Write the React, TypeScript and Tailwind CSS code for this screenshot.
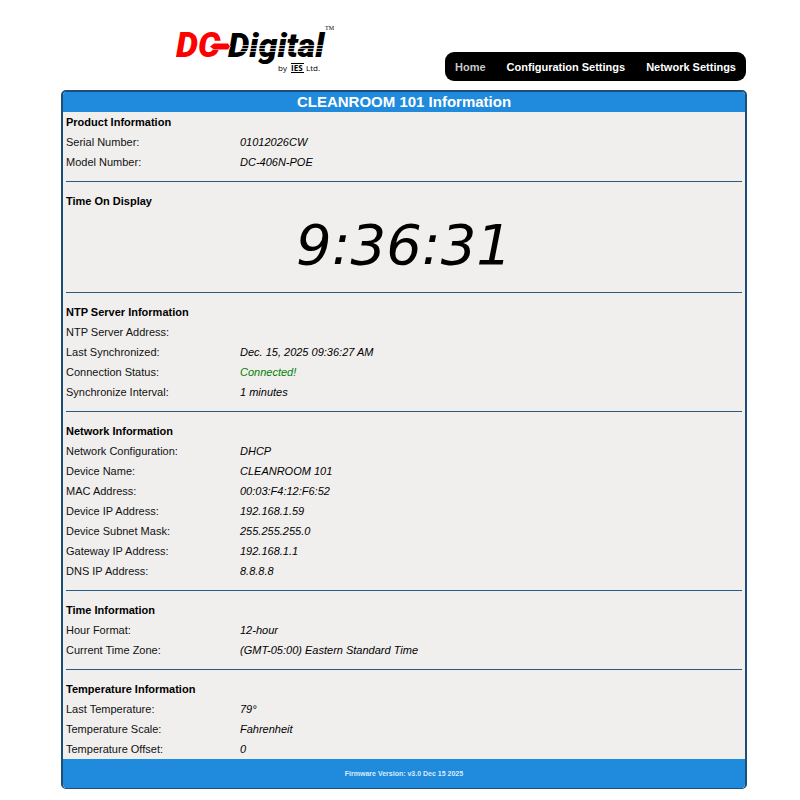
import clsx from 'clsx';
import type { ReactNode } from 'react';

interface Row {
  label: string;
  value: string;
  tone?: 'ok';
}

const navLinks = [
  { label: 'Home', href: '#home', current: true },
  { label: 'Configuration Settings', href: '#configuration', current: false },
  { label: 'Network Settings', href: '#network', current: false },
];

const productRows: Row[] = [
  { label: 'Serial Number:', value: '01012026CW' },
  { label: 'Model Number:', value: 'DC-406N-POE' },
];

const ntpRows: Row[] = [
  { label: 'NTP Server Address:', value: '' },
  { label: 'Last Synchronized:', value: 'Dec. 15, 2025 09:36:27 AM' },
  { label: 'Connection Status:', value: 'Connected!', tone: 'ok' },
  { label: 'Synchronize Interval:', value: '1 minutes' },
];

const networkRows: Row[] = [
  { label: 'Network Configuration:', value: 'DHCP' },
  { label: 'Device Name:', value: 'CLEANROOM 101' },
  { label: 'MAC Address:', value: '00:03:F4:12:F6:52' },
  { label: 'Device IP Address:', value: '192.168.1.59' },
  { label: 'Device Subnet Mask:', value: '255.255.255.0' },
  { label: 'Gateway IP Address:', value: '192.168.1.1' },
  { label: 'DNS IP Address:', value: '8.8.8.8' },
];

const timeRows: Row[] = [
  { label: 'Hour Format:', value: '12-hour' },
  { label: 'Current Time Zone:', value: '(GMT-05:00) Eastern Standard Time' },
];

const temperatureRows: Row[] = [
  { label: 'Last Temperature:', value: '79°' },
  { label: 'Temperature Scale:', value: 'Fahrenheit' },
  { label: 'Temperature Offset:', value: '0' },
];

function Logo() {
  return <svg viewBox="0 0 160 52" className="h-[52px] w-[160px]" role="img" aria-label="DC-Digital by IES Ltd.">
    <g className="font-[Roboto,sans-serif] font-black italic">
      <text x="0" y="33" fill="#fe0000" className="text-[35px]">DC</text>
      <text x="52" y="33" fill="#000" className="text-[34px]">Digital</text>
    </g>
    <path d="M34 22.5l4-3h14l2 3-2 3H38z" fill="#fe0000" stroke="#fff" strokeWidth="1.2" paintOrder="stroke" />
    {/* speed lines cut through the black half of the word */}
    <path d="M61 21.5h86M61 24.5h86M61 27.5h86" stroke="#fff" strokeWidth="0.7" />
    <text x="149" y="6" className="font-['Liberation_Serif',serif] text-[6px]">TM</text>
    <g className="font-['Open_Sans',sans-serif] text-[8px]">
      <text x="102" y="47">by</text>
      <text x="115" y="47" className="font-bold">IES</text>
      <text x="130" y="47">Ltd.</text>
    </g>
    <path d="M115 39.5h13M115 48.5h13" stroke="#000" strokeWidth="1" />
  </svg>;
}

function Section({ title, rows, children }: { title: string; rows?: Row[]; children?: ReactNode }) {
  return <section className="mt-[9px] border-t border-[#285a82] pt-[9px] first:mt-0 first:border-t-0 first:pt-0">
    <h2 className="font-bold">{title}</h2>
    {rows ? <table className="w-full table-fixed border-collapse">
      <tbody>
        {rows.map((row) => <tr key={row.label}>
          <th scope="row" className="w-[174px] p-0 text-left font-normal text-[#111]">{row.label}</th>
          <td className={clsx('h-5 p-0 italic', row.tone === 'ok' && 'text-[#008000]')}>{row.value}</td>
        </tr>)}
      </tbody>
    </table> : null}
    {children}
  </section>;
}

export default function App() {
  return <div className="bg-white pt-6 pr-[53px] pb-2.5 pl-[61px] font-['Liberation_Sans',Arial,sans-serif] text-[11px] leading-5 text-black">
    <header className="flex justify-between pr-px pl-[115px]">
      <Logo />
      <nav className="mt-7 flex h-[29px] items-center gap-[21px] rounded-[9px] bg-black px-2.5 font-bold whitespace-nowrap">
        {navLinks.map((link) => <a
          key={link.label}
          href={link.href}
          aria-current={link.current ? 'page' : undefined}
          className={link.current ? 'text-[#c8c8c8]' : 'text-white'}
        >{link.label}</a>)}
      </nav>
    </header>
    <main className="mt-[9px] overflow-hidden rounded-[5px] border-2 border-b border-[#1b4f78] bg-[#f0efee]">
      <h1 className="bg-[#208bdd] text-center text-[15px] font-bold text-white">CLEANROOM 101 Information</h1>
      <div className="px-[3px]">
        <Section title="Product Information" rows={productRows} />
        <Section title="Time On Display">
          <p className="h-[72px] text-center font-['DejaVu_Sans',Verdana,sans-serif] text-[56px] leading-[68px] italic">9:36:31</p>
        </Section>
        <Section title="NTP Server Information" rows={ntpRows} />
        <Section title="Network Information" rows={networkRows} />
        <Section title="Time Information" rows={timeRows} />
        <Section title="Temperature Information" rows={temperatureRows} />
      </div>
      <footer className="flex h-[29px] items-center justify-center bg-[#208bdd] text-[7px] font-bold text-[#d9ecfb]">
        Firmware Version: v3.0 Dec 15 2025
      </footer>
    </main>
  </div>;
}
